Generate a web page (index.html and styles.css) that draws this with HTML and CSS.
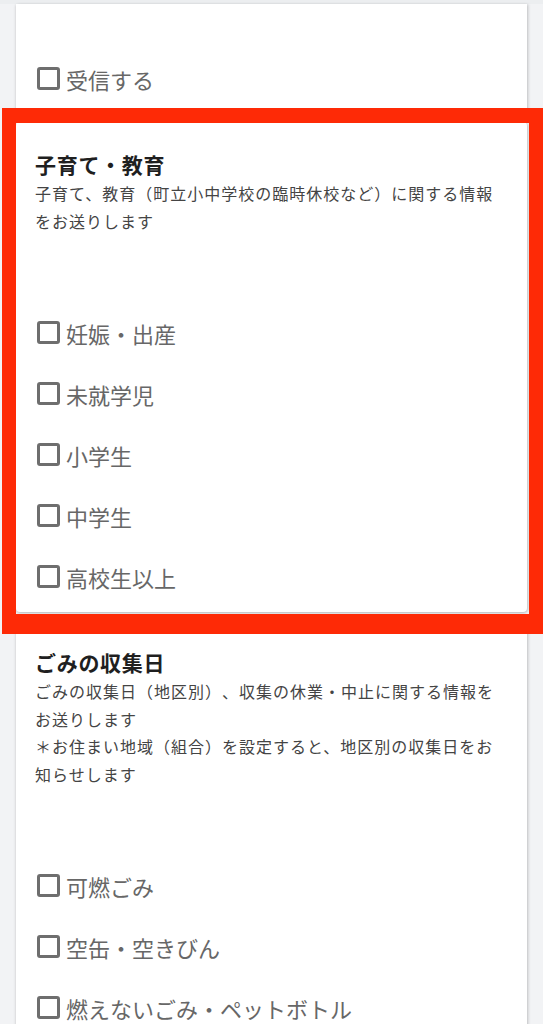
FILE: index.html
```html
<!DOCTYPE html>
<html lang="ja">
<head>
<meta charset="utf-8">
<title>配信設定</title>
<link rel="stylesheet" href="styles.css">
</head>
<body>
<div class="topbar"></div>
<main class="list">
  <section class="card card-tail">
    <div class="options">
      <label class="opt"><input type="checkbox"><span>受信する</span></label>
    </div>
  </section>

  <section class="card">
    <h2 class="title">子育て・教育</h2>
    <p class="desc">子育て、教育（町立小中学校の臨時休校など）に関する情報をお送りします</p>
    <div class="options">
      <label class="opt"><input type="checkbox"><span>妊娠・出産</span></label>
      <label class="opt"><input type="checkbox"><span>未就学児</span></label>
      <label class="opt"><input type="checkbox"><span>小学生</span></label>
      <label class="opt"><input type="checkbox"><span>中学生</span></label>
      <label class="opt"><input type="checkbox"><span>高校生以上</span></label>
    </div>
  </section>

  <section class="card">
    <h2 class="title">ごみの収集日</h2>
    <p class="desc">ごみの収集日（地区別）、収集の休業・中止に関する情報をお送りします<br>＊お住まい地域（組合）を設定すると、地区別の収集日をお知らせします</p>
    <div class="options">
      <label class="opt"><input type="checkbox"><span>可燃ごみ</span></label>
      <label class="opt"><input type="checkbox"><span>空缶・空きびん</span></label>
      <label class="opt"><input type="checkbox"><span>燃えないごみ・ペットボトル</span></label>
    </div>
  </section>
</main>
<div class="highlight"></div>
</body>
</html>
```
FILE: styles.css
```css
html, body {
  margin: 0;
  padding: 0;
}
body {
  background: #f2f3f5;
  font-family: "Noto Sans CJK JP", "Noto Sans", sans-serif;
  text-spacing-trim: space-all;
  width: 543px;
  height: 1024px;
  overflow: hidden;
  position: relative;
}
.topbar {
  height: 4px;
  background: #eceef0;
}
.list {
  display: flex;
  flex-direction: column;
  gap: 8px;
  padding: 0 16px;
}
.card {
  background: #ffffff;
  border-radius: 4px;
  box-shadow: 0 1px 3px rgba(0, 0, 0, 0.22), 2px 0 3px rgba(0, 0, 0, 0.08);
  padding: 28px 19px 5px 19px;
}
.card-tail {
  padding-top: 44px;
  border-top-left-radius: 0;
  border-top-right-radius: 0;
}
.title {
  margin: 0;
  font-size: 21px;
  line-height: 28px;
  font-weight: 700;
  color: #1f1f1f;
  letter-spacing: 0.7px;
}
.desc {
  margin: 2px 0 0 0;
  font-size: 16px;
  line-height: 27.5px;
  color: #444444;
  letter-spacing: 1px;
}
.desc + .options {
  margin-top: 67px;
}
.options {
  display: flex;
  flex-direction: column;
}
.opt {
  height: 61px;
  display: flex;
  align-items: center;
  gap: 6px;
  padding-left: 2px;
  font-size: 22px;
  color: #676767;
}
.opt input {
  appearance: none;
  -webkit-appearance: none;
  margin: 0;
  width: 23px;
  height: 23px;
  box-sizing: border-box;
  border: 3px solid #6e6e6e;
  border-radius: 3px;
  background: #ffffff;
  flex: none;
}
.highlight {
  position: absolute;
  left: 2px;
  right: 0;
  top: 108px;
  height: 526px;
  box-sizing: border-box;
  border-style: solid;
  border-color: #fe2a06;
  border-width: 15px 14px 20px 14px;
  pointer-events: none;
}
```
